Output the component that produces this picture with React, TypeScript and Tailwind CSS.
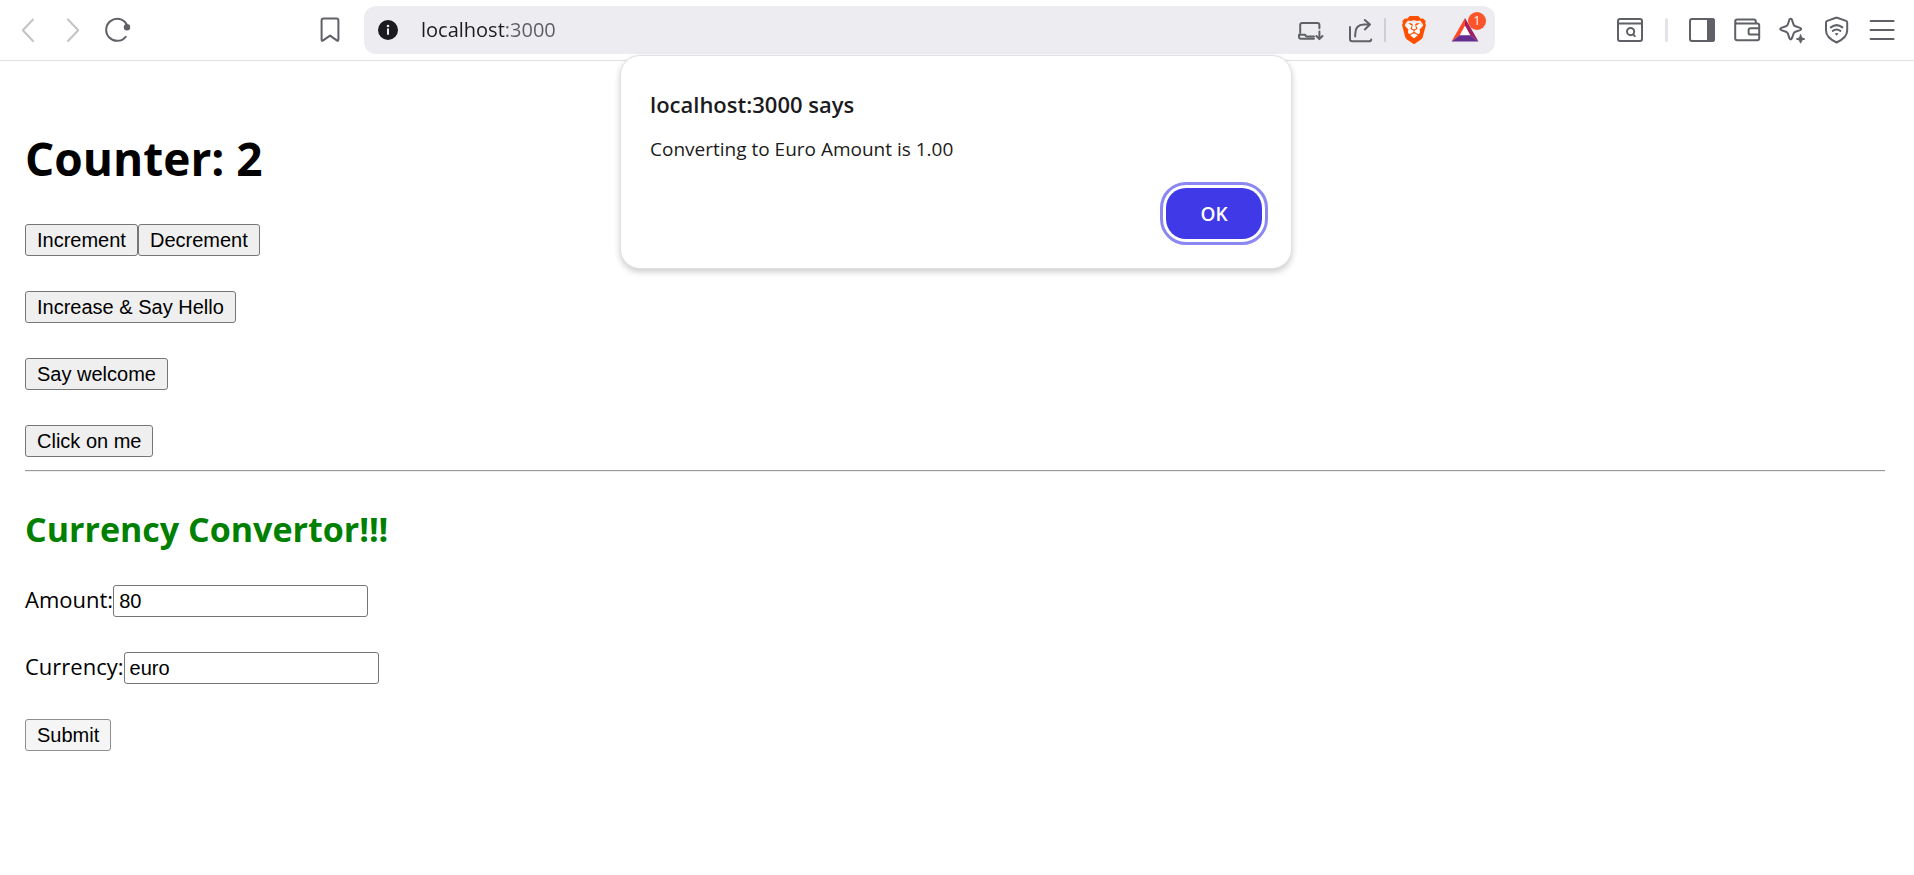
import { useState } from "react";
import type { InputHTMLAttributes, ButtonHTMLAttributes, ReactNode } from "react";
import { SiBrave } from "react-icons/si";

const line = {
  fill: "none",
  stroke: "currentColor",
  strokeWidth: 2,
  strokeLinecap: "round",
  strokeLinejoin: "round",
} as const;

function IconButton({ label, className = "", children }: { label: string; className?: string; children: ReactNode }) {
  return (
    <button type="button" aria-label={label} className={`flex shrink-0 items-center justify-center text-[#5f6167] ${className}`}>
      {children}
    </button>
  );
}

function Glyph({ children }: { children: ReactNode }) {
  return (
    <svg width="28" height="28" viewBox="0 0 28 28" aria-hidden="true" {...line}>
      {children}
    </svg>
  );
}

function BrowserBar() {
  const [url, setUrl] = useState("localhost:3000");
  return (
    <header className="flex h-[61px] items-center border-b border-[#dfdfe4] bg-white pr-[18px] pl-[14px]">
      <nav className="flex items-center gap-[17px]">
        <IconButton label="Back">
          <span className="text-[#c2c3c6]">
            <Glyph>
              <path d="M19 3.5 8.8 14.2 19 25" />
            </Glyph>
          </span>
        </IconButton>
        <IconButton label="Forward">
          <span className="text-[#c2c3c6]">
            <Glyph>
              <path d="M9 3.5 19.2 14.2 9 25" />
            </Glyph>
          </span>
        </IconButton>
        <IconButton label="Reload">
          <Glyph>
            <path d="M21.7 20.8A11 11 0 1 1 22.6 8.2" />
            <circle cx="23" cy="11.2" r="3.2" fill="currentColor" stroke="none" />
          </Glyph>
        </IconButton>
      </nav>

      <IconButton label="Bookmark this page" className="ml-[184px]">
        <Glyph>
          <path d="M5.6 4.6q0-2 2-2h12.8q2 0 2 2v19q0 2-1.6.8L14 19.6l-6.8 4.8q-1.6 1.2-1.6-.8z" />
        </Glyph>
      </IconButton>

      <div className="ml-[20px] flex h-[48px] flex-1 items-center rounded-[12px] bg-[#edecf1] pr-[16px] pl-[14px]">
        <IconButton label="View site information">
          <svg width="20" height="20" viewBox="0 0 20 20" aria-hidden="true">
            <circle cx="10" cy="10" r="10" fill="#1b1b20" />
            <path d="M10 8.6v6.2" stroke="#edecf1" strokeWidth="2" />
            <circle cx="10" cy="6" r="1.3" fill="#edecf1" />
          </svg>
        </IconButton>
        <input
          aria-label="Address"
          value={url}
          onChange={(e) => setUrl(e.target.value)}
          className="ml-[23px] min-w-0 flex-1 bg-[linear-gradient(to_right,#1b1b20_84px,#5c5c66_84px)] bg-clip-text font-['Open_Sans','Noto_Sans',sans-serif] text-[20px] leading-[30px] text-transparent caret-black outline-none"
        />
        <IconButton label="Install app">
          <Glyph>
            <path d="M4.2 17V9q0-2 2-2h15.200q2 0 2 2v3.200" />
            <path d="M18 22.800H5q-2 0-2-2v-2h6.200q.6 1.600 1.600 1.600H18M23.400 15.400v7.400M20.300 20l3.100 3.100 3.100-3.100" />
          </Glyph>
        </IconButton>
        <IconButton label="Share" className="ml-[22px]">
          <Glyph>
            <path d="M4 11v12q0 2.200 2.200 2.200h16.800q2.200 0 2.200-1.800M9.200 20.400v-2.200Q9.200 8.600 18 8.600h5.400M18.800 4l5.200 4.600-5.200 4.800" />
          </Glyph>
        </IconButton>
        <span className="ml-[10px] h-[24px] w-[2px] bg-[#cfced6]" />
        <IconButton label="Brave Shields" className="ml-[15px]">
          <svg width="26" height="28" viewBox="0 0 26 28" aria-hidden="true">
            <path d="M7 7h12l2 5-3 9-5 3.500L8 21 5 12z" fill="#fff" />
            <SiBrave x="-1" y="0" size={28} color="#ff5000" />
          </svg>
        </IconButton>
        <IconButton label="Brave Rewards, 1 notification" className="relative ml-[24px]">
          <svg width="28" height="28" viewBox="0 0 28 28" aria-hidden="true">
            <path d="M14 9.500 8.700 19.300h10.600z" fill="#fff" />
            <path d="M14 2 .5 25.500l8.200-6.200L14 9.500z" fill="#ff4724" />
            <path d="M14 2l13.500 23.500-8.200-6.200L14 9.500z" fill="#9e1f63" />
            <path d="M.5 25.500h27l-8.200-6.200H8.700z" fill="#662d91" />
          </svg>
          <span className="absolute -top-[4px] -right-[7px] flex size-[18px] items-center justify-center rounded-full bg-[#fb542b] font-['Open_Sans','Noto_Sans',sans-serif] text-[12px] leading-[18px] text-white">
            1
          </span>
        </IconButton>
      </div>

      <div className="ml-[121px] flex items-center gap-[17px]">
        <IconButton label="Search tabs">
          <Glyph>
            <rect x="2" y="3" width="24" height="22" rx="2" />
            <path d="M2 7.400h24" />
            <circle cx="14.600" cy="15.600" r="3.600" />
            <path d="m17.200 18.400 1.600 1.700" />
          </Glyph>
        </IconButton>
        <span className="ml-[4px] h-[24px] w-[3px] rounded-full bg-[#e3e3e9]" />
        <IconButton label="Show sidebar" className="ml-[3px]">
          <Glyph>
            <rect x="2" y="3" width="24" height="22" rx="2" />
            <path d="M20 3h4q2 0 2 2v18q0 2-2 2h-4z" fill="currentColor" />
          </Glyph>
        </IconButton>
        <IconButton label="Wallet">
          <Glyph>
            <path d="M2.200 5.400q0-2 2-2h16.600q2 0 2 2v2M2.200 5.400v16.800q0 2 2 2h20q2 0 2-2V9.400q0-2-2-2h-20q-2 0-2-2M26.200 12.200h-8.400q-2.200 0-2.200 2.200v2q0 2.200 2.200 2.200h8.400" />
          </Glyph>
        </IconButton>
        <IconButton label="Leo AI">
          <Glyph>
            <path d="M11.500 3.300q1.600-1.400 2.400.4l1.600 4.600q.5 1.500 2 2l4.600 1.600q2.200 1.100 0 2.200l-4.600 1.600q-1.500.5-2 2l-1.600 4.600q-1.200 2.200-2.400 0l-1.600-4.600q-.5-1.500-2-2l-4.600-1.600q-2.200-1.100 0-2.200l4.600-1.600q1.500-.5 2-2z" />
            <path d="m22.600 18.800 1.200 3 3 1.200-3 1.200-1.200 3-1.200-3-3-1.200 3-1.200z" fill="currentColor" strokeWidth="1" />
          </Glyph>
        </IconButton>
        <IconButton label="VPN">
          <Glyph>
            <path d="M13 1.800q.6-.2 1.200 0L23 4.900q1.200.5 1.200 1.800v7.600q0 7.500-10.600 12.200Q3 21.800 3 14.300V6.700q0-1.300 1.200-1.800z" />
            <path d="M7.800 11.400q5.800-4.600 11.600 0M9.800 14.900q3.800-2.800 7.600 0" />
            <path d="m11.600 17.600 2 2.100 2-2.100q-2-1.200-4 0z" fill="currentColor" stroke="none" />
          </Glyph>
        </IconButton>
        <IconButton label="Menu">
          <Glyph>
            <path d="M2.600 5h23M2.600 14h23M2.600 23h23" />
          </Glyph>
        </IconButton>
      </div>
    </header>
  );
}

function AlertDialog({ onClose }: { onClose: () => void }) {
  return (
    <div className="absolute inset-x-0 top-[55px] flex justify-center pr-[2px]">
      <dialog
        open
        aria-labelledby="alert-title"
        className="relative flex w-[672px] max-w-full flex-col rounded-[20px] border border-[#e0e0e6] bg-white px-[29px] pt-[32px] pb-[29px] font-['Open_Sans','Noto_Sans',sans-serif] text-[#1b1b20] shadow-[0_3px_6px_rgba(0,0,0,0.2)]"
      >
        <h2 id="alert-title" className="text-[22px] leading-[32px] font-semibold">
          localhost:3000 says
        </h2>
        <p className="mt-[15px] text-[19px] leading-[28px]">Converting to Euro Amount is 1.00</p>
        <button
          type="button"
          onClick={onClose}
          className="mt-[25px] h-[51px] w-[96px] self-end rounded-[20px] bg-[#3f39e8] text-[19px] leading-[24px] font-semibold text-white outline-3 outline-offset-3 outline-[#8b87f3]"
        >
          OK
        </button>
      </dialog>
    </div>
  );
}

function PlainButton({ className = "bg-[#efefef] border-[#767676]", ...props }: ButtonHTMLAttributes<HTMLButtonElement>) {
  return (
    <button
      className={`h-[32px] rounded-[3px] border px-[11px] font-['Liberation_Sans',Arial,sans-serif] text-[20px] leading-[28px] text-black ${className}`}
      {...props}
    />
  );
}

function Field({ label, id, ...props }: { label: string; id: string } & InputHTMLAttributes<HTMLInputElement>) {
  return (
    <div className="flex h-[32px] items-start">
      <label htmlFor={id} className="text-[22px] leading-[28px]">
        {label}
      </label>
      <input
        id={id}
        className="h-[32px] w-[255px] rounded-[3px] border border-[#767676] bg-white px-[5px] font-['Liberation_Sans',Arial,sans-serif] text-[20px] leading-[28px] text-black"
        {...props}
      />
    </div>
  );
}

export default function App() {
  const [count, setCount] = useState(2);
  const [amount, setAmount] = useState("80");
  const [currency, setCurrency] = useState("euro");
  const [alertOpen, setAlertOpen] = useState(true);

  return (
    <div className="relative min-h-screen bg-white font-['Open_Sans','Noto_Sans',sans-serif] text-black">
      <BrowserBar />
      <main className="pt-[65px] pr-[29px] pl-[25px]">
        <h1 className="text-[46px] leading-[64px] font-bold">Counter: {count}</h1>
        <div className="mt-[34px] flex flex-col items-start gap-[35px]">
          <div className="flex">
            <PlainButton type="button" onClick={() => setCount(count + 1)}>
              Increment
            </PlainButton>
            <PlainButton type="button" onClick={() => setCount(count - 1)}>
              Decrement
            </PlainButton>
          </div>
          <PlainButton type="button" onClick={() => setCount(count + 1)}>
            Increase &amp; Say Hello
          </PlainButton>
          <PlainButton type="button">Say welcome</PlainButton>
          <PlainButton type="button">Click on me</PlainButton>
        </div>
        <hr className="mt-[13px] border-t border-b border-t-[#9a9a9a] border-b-[#eeeeee]" />
        <h2 className="mt-[33px] text-[34px] leading-[48px] font-bold text-[#008000]">Currency Convertor!!!</h2>
        <form
          className="mt-[32px] flex flex-col items-start gap-[35px]"
          onSubmit={(e) => {
            e.preventDefault();
            setAlertOpen(true);
          }}
        >
          <Field label="Amount:" id="amount" value={amount} onChange={(e) => setAmount(e.target.value)} />
          <Field label="Currency:" id="currency" value={currency} onChange={(e) => setCurrency(e.target.value)} />
          <PlainButton type="submit" className="border-[#8f8f8f] bg-[#f5f5f5]">
            Submit
          </PlainButton>
        </form>
      </main>
      {alertOpen && <AlertDialog onClose={() => setAlertOpen(false)} />}
    </div>
  );
}
